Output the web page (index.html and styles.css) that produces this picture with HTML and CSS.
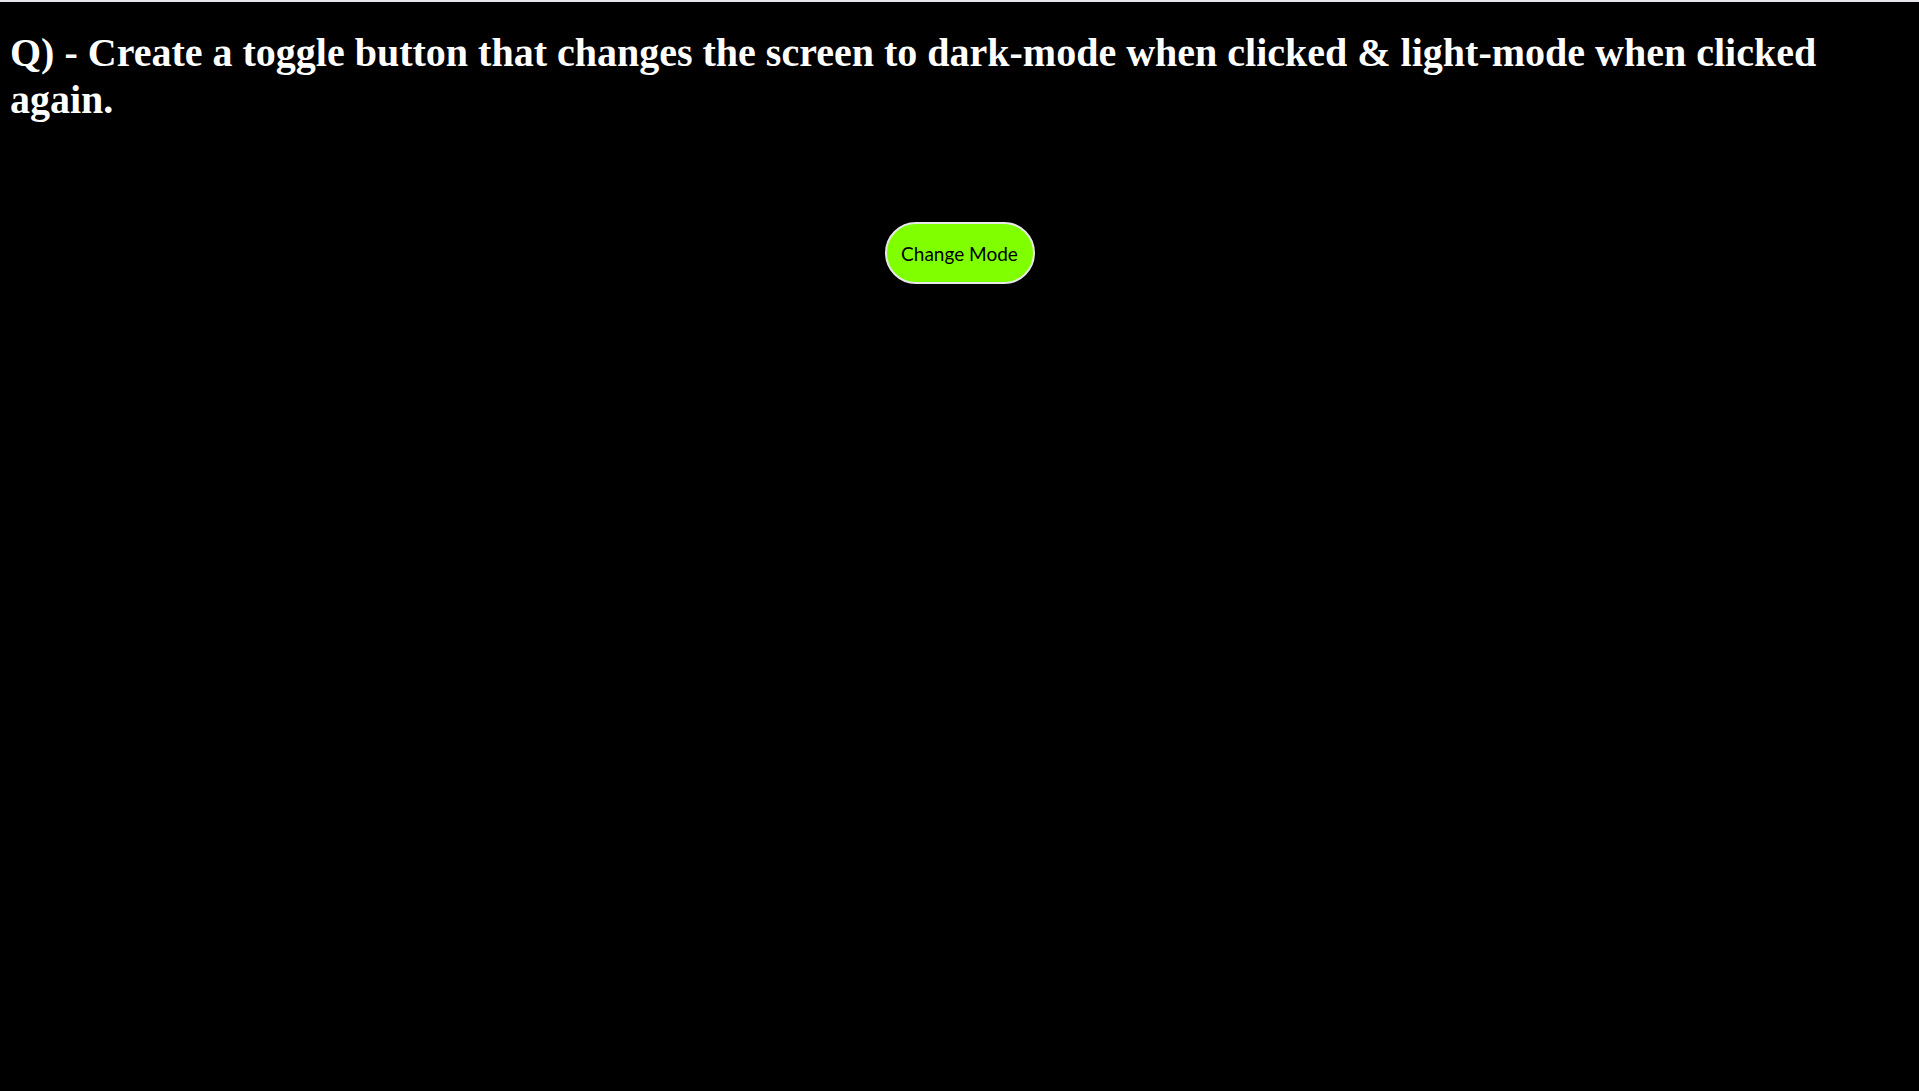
FILE: index.html
```html
<!DOCTYPE html>
<html>
<head>
<meta charset="utf-8">
<title>Toggle Mode</title>
<link rel="stylesheet" href="styles.css">
</head>
<body>
<div class="topbar"></div>
<main class="page">
  <h1 class="question">Q) - Create a toggle button that changes the screen to dark-mode when clicked &amp; light-mode when clicked again.</h1>
  <div class="actions">
    <button class="mode-btn">Change Mode</button>
  </div>
</main>
</body>
</html>
```
FILE: styles.css
```css
html, body {
  margin: 0;
  padding: 0;
  background: #000;
  height: 100%;
}
.topbar {
  height: 2px;
  background: #e5e7eb;
}
.page {
  padding: 0 10px;
}
.question {
  margin: 27px 0 0 0;
  font-family: "Liberation Serif", "Times New Roman", serif;
  font-weight: bold;
  font-size: 40px;
  line-height: 47px;
  color: #fff;
}
.actions {
  display: flex;
  justify-content: center;
  margin-top: 99px;
}
.mode-btn {
  width: 150px;
  height: 62px;
  border: 2px solid #e8e8e8;
  border-radius: 31px;
  background: #7fff00;
  color: #000;
  font-family: "Lato", "Open Sans", sans-serif;
  font-size: 19px;
  padding: 0;
  cursor: pointer;
}
```
